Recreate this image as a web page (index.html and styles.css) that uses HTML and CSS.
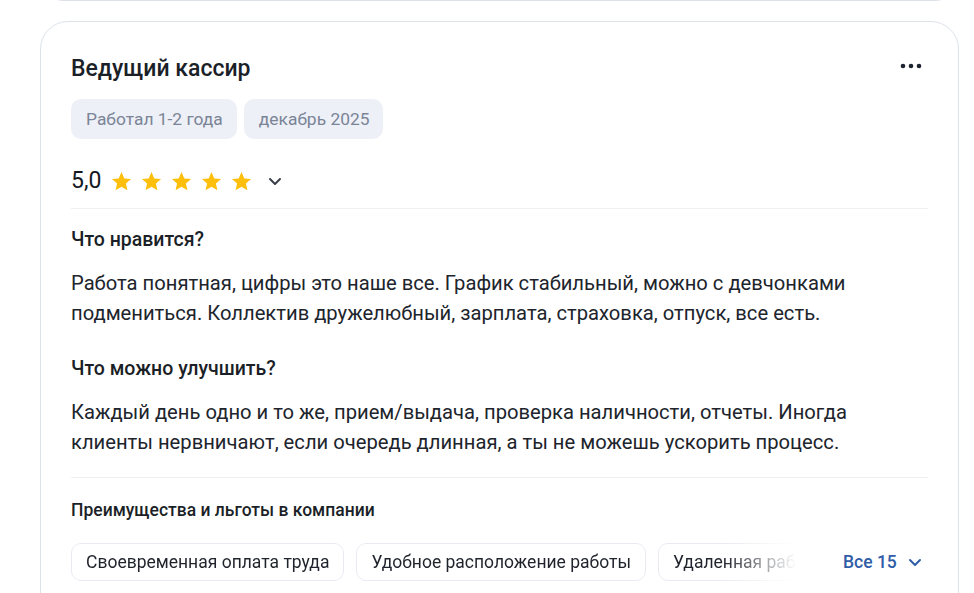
FILE: index.html
```
<!DOCTYPE html>
<html lang="ru">
<head>
<meta charset="utf-8">
<link rel="stylesheet" href="styles.css">
</head>
<body>
<div class="prev-card"></div>
<div class="card">
  <div class="head">
    <h2 class="title">Ведущий кассир</h2>
    <button class="more" aria-label="Ещё">
      <svg width="24" height="6" viewBox="0 0 24 6"><circle cx="4" cy="3" r="2.3" fill="#1d2330"/><circle cx="12" cy="3" r="2.3" fill="#1d2330"/><circle cx="20" cy="3" r="2.3" fill="#1d2330"/></svg>
    </button>
  </div>
  <div class="tags">
    <span class="tag">Работал 1-2 года</span>
    <span class="tag">декабрь 2025</span>
  </div>
  <div class="rating">
    <span class="score">5,0</span>
    <span class="stars">
      <svg class="star" viewBox="0 0 24 24"><path d="M12 2.2l2.9 6.6 7.1.6-5.4 4.7 1.6 7L12 17.4l-6.2 3.7 1.6-7L2 9.4l7.1-.6z"/></svg>
      <svg class="star" viewBox="0 0 24 24"><path d="M12 2.2l2.9 6.6 7.1.6-5.4 4.7 1.6 7L12 17.4l-6.2 3.7 1.6-7L2 9.4l7.1-.6z"/></svg>
      <svg class="star" viewBox="0 0 24 24"><path d="M12 2.2l2.9 6.6 7.1.6-5.4 4.7 1.6 7L12 17.4l-6.2 3.7 1.6-7L2 9.4l7.1-.6z"/></svg>
      <svg class="star" viewBox="0 0 24 24"><path d="M12 2.2l2.9 6.6 7.1.6-5.4 4.7 1.6 7L12 17.4l-6.2 3.7 1.6-7L2 9.4l7.1-.6z"/></svg>
      <svg class="star" viewBox="0 0 24 24"><path d="M12 2.2l2.9 6.6 7.1.6-5.4 4.7 1.6 7L12 17.4l-6.2 3.7 1.6-7L2 9.4l7.1-.6z"/></svg>
    </span>
    <svg class="chev" width="14" height="9" viewBox="0 0 14 9"><path d="M2 2l5 5 5-5" fill="none" stroke="#3a3f4a" stroke-width="2" stroke-linecap="round" stroke-linejoin="round"/></svg>
  </div>
  <div class="section">
    <h3 class="sec-title">Что нравится?</h3>
    <p class="text">Работа понятная, цифры это наше все. График стабильный, можно с девчонками подмениться. Коллектив дружелюбный, зарплата, страховка, отпуск, все есть.</p>
    <h3 class="sec-title sec-title2">Что можно улучшить?</h3>
    <p class="text">Каждый день одно и то же, прием/выдача, проверка наличности, отчеты. Иногда клиенты нервничают, если очередь длинная, а ты не можешь ускорить процесс.</p>
  </div>
  <div class="benefits">
    <h4 class="ben-title">Преимущества и льготы в компании</h4>
    <div class="ben-row">
      <div class="chips">
        <span class="chip">Своевременная оплата труда</span>
        <span class="chip">Удобное расположение работы</span>
        <span class="chip">Удаленная работа</span>
      </div>
      <button class="all">Все 15
        <svg width="14" height="9" viewBox="0 0 14 9"><path d="M2 2l5 5 5-5" fill="none" stroke="#2f5da8" stroke-width="2" stroke-linecap="round" stroke-linejoin="round"/></svg>
      </button>
    </div>
  </div>
</div>
</body>
</html>
```
FILE: styles.css
```
* { box-sizing: border-box; }
html, body { margin: 0; padding: 0; background: #fff; }
body {
  font-family: Roboto, "Noto Sans", Arial, sans-serif;
  color: #1f232b;
  padding: 0 15px 0 40px;
  overflow: hidden;
  height: 593px;
}
.prev-card {
  height: 24px;
  margin-top: -23px;
  border: 1px solid #dde2ea;
  border-top: none;
  border-radius: 0 0 24px 24px;
}
.card {
  margin-top: 20px;
  border: 1px solid #dde2ea;
  border-radius: 28px;
  padding: 31px 30px 0 30px;
  height: 700px;
}
.head {
  display: flex;
  justify-content: space-between;
  align-items: center;
}
.title {
  margin: 0;
  font-size: 23px;
  font-weight: 500;
  line-height: 32px;
  color: #1b1f27;
}
.more {
  border: none;
  background: none;
  padding: 0;
  margin-right: 5px;
  margin-top: -6px;
  display: flex;
}
.tags {
  display: flex;
  gap: 7px;
  margin-top: 14px;
}
.tag {
  background: #edf0f6;
  color: #7a8497;
  font-size: 17.4px;
  line-height: 40px;
  height: 40px;
  padding: 0 14px 0 15px;
  border-radius: 10px;
}
.rating {
  display: flex;
  align-items: center;
  margin-top: 29px;
  padding-bottom: 14px;
  border-bottom: 1px solid #eef0f4;
}
.score {
  font-size: 23px;
  line-height: 26px;
  color: #15181f;
  margin-right: 9px;
}
.stars { display: flex; gap: 7px; }
.star { width: 23px; height: 23px; fill: #fdbf0b; }
.chev { margin-left: 15px; }
.section { padding-top: 18px; }
.sec-title {
  margin: 0;
  font-size: 19.5px;
  font-weight: 500;
  line-height: 26px;
  color: #1b1f27;
}
.sec-title2 { margin-top: 28px; }
.text {
  margin: 15px 0 0 0;
  font-size: 20.2px;
  line-height: 30px;
  color: #20242c;
  padding-right: 40px;
}
.benefits {
  margin-top: 20px;
  border-top: 1px solid #eef0f4;
  padding-top: 20px;
}
.ben-title {
  margin: 0;
  font-size: 17.5px;
  font-weight: 500;
  line-height: 24px;
  color: #1b1f27;
}
.ben-row {
  display: flex;
  align-items: center;
  margin-top: 21px;
}
.chips {
  display: flex;
  gap: 12px;
  width: 725px;
  overflow: hidden;
  -webkit-mask-image: linear-gradient(to right, #000 90%, transparent 100%);
  mask-image: linear-gradient(to right, #000 90%, transparent 100%);
  flex-shrink: 0;
}
.chip {
  flex-shrink: 0;
  border: 1px solid #e8ebf1;
  border-radius: 10px;
  height: 38px;
  line-height: 36px;
  padding: 0 14px;
  font-size: 17.5px;
  color: #1f232b;
  white-space: nowrap;
}
.all {
  border: none;
  background: none;
  padding: 0;
  margin-left: 47px;
  display: flex;
  align-items: center;
  gap: 11px;
  font-family: inherit;
  font-size: 17.5px;
  font-weight: 500;
  color: #2f5da8;
}
```
